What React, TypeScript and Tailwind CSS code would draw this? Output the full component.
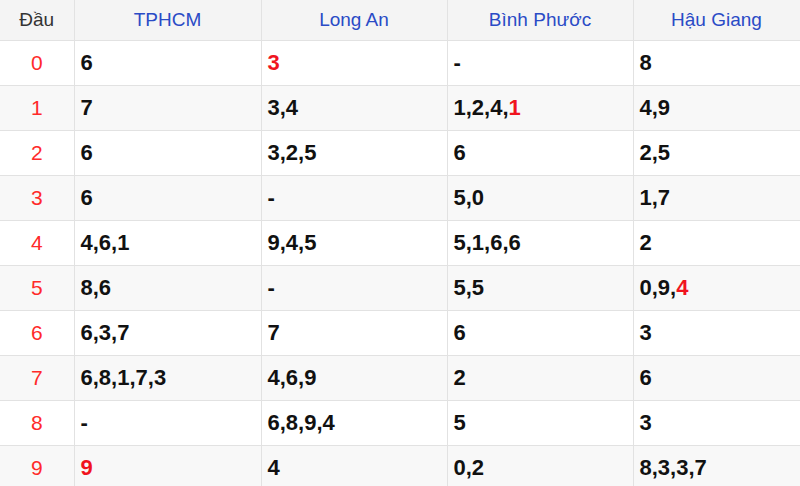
import React from "react";

type Cell = (string | { r: string })[];

const rows: { d: string; cols: Cell[] }[] = [
  { d: "0", cols: [["6"], [{ r: "3" }], ["-"], ["8"]] },
  { d: "1", cols: [["7"], ["3,4"], ["1,2,4,", { r: "1" }], ["4,9"]] },
  { d: "2", cols: [["6"], ["3,2,5"], ["6"], ["2,5"]] },
  { d: "3", cols: [["6"], ["-"], ["5,0"], ["1,7"]] },
  { d: "4", cols: [["4,6,1"], ["9,4,5"], ["5,1,6,6"], ["2"]] },
  { d: "5", cols: [["8,6"], ["-"], ["5,5"], ["0,9,", { r: "4" }]] },
  { d: "6", cols: [["6,3,7"], ["7"], ["6"], ["3"]] },
  { d: "7", cols: [["6,8,1,7,3"], ["4,6,9"], ["2"], ["6"]] },
  { d: "8", cols: [["-"], ["6,8,9,4"], ["5"], ["3"]] },
  { d: "9", cols: [[{ r: "9" }], ["4"], ["0,2"], ["8,3,3,7"]] },
];

const heads = ["TPHCM", "Long An", "Bình Phước", "Hậu Giang"];
const widths = ["w-[187px]", "w-[186px]", "w-[186px]", "w-[167px]"];

export default function App() {
  return (
    <div
      className="w-[800px] h-[486px] overflow-hidden bg-white"
      style={{ fontFamily: '"Liberation Sans", Arial, sans-serif' }}
    >
      <table className="border-collapse table-fixed w-[800px]">
        <thead>
          <tr className="bg-[#f4f4f4] h-[40px]">
            <th className="w-[74px] border-r border-b border-[#e2e2e2] font-normal text-[19px] text-[#333] text-center">
              Đầu
            </th>
            {heads.map((h, i) => (
              <th
                key={h}
                className={`${widths[i]} border-r border-b border-[#e2e2e2] font-normal text-[19px] text-[#2a4bc6] text-center`}
              >
                {h}
              </th>
            ))}
          </tr>
        </thead>
        <tbody>
          {rows.map((row, ri) => (
            <tr
              key={row.d}
              className={`${ri % 2 === 1 ? "bg-[#f8f8f8]" : "bg-white"} h-[45px]`}
            >
              <td className="border-r border-b border-[#e2e2e2] text-center text-[21px] text-[#ff2a2a]">
                {row.d}
              </td>
              {row.cols.map((c, ci) => (
                <td
                  key={ci}
                  className="border-r border-b border-[#e2e2e2] pl-[6px] text-[22px] font-bold text-[#111]"
                >
                  {c.map((p, pi) =>
                    typeof p === "string" ? (
                      <span key={pi}>{p}</span>
                    ) : (
                      <span key={pi} className="text-[#f0141e]">
                        {p.r}
                      </span>
                    )
                  )}
                </td>
              ))}
            </tr>
          ))}
        </tbody>
      </table>
    </div>
  );
}
